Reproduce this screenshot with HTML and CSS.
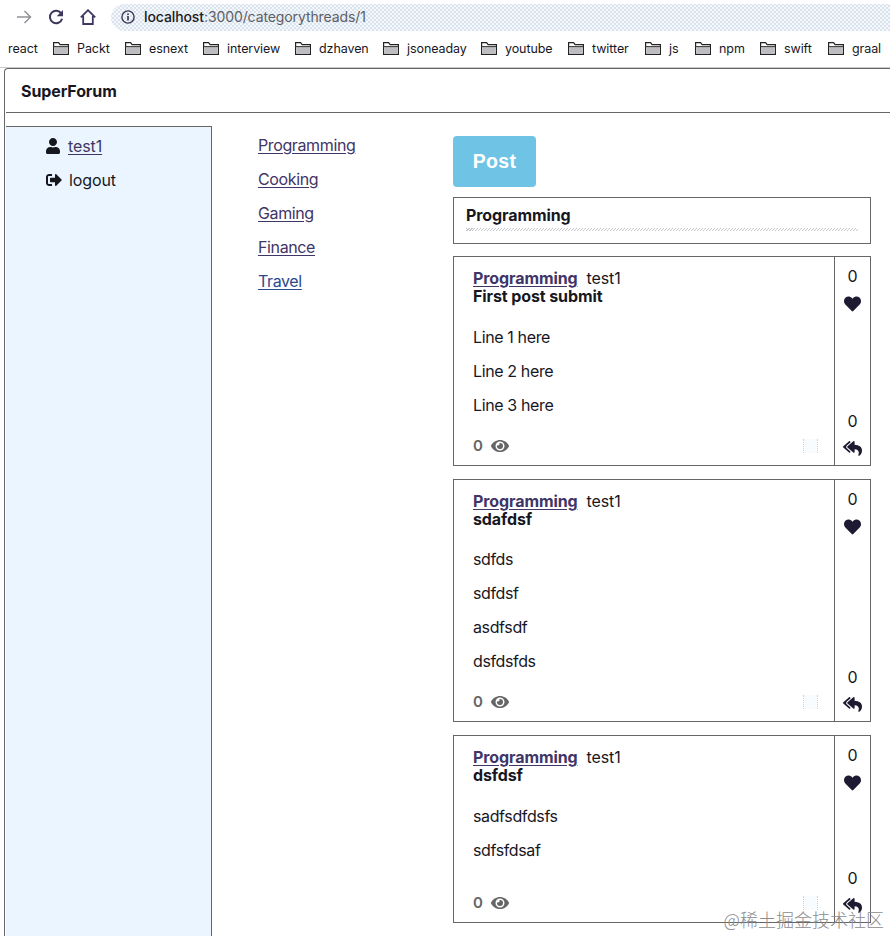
FILE: index.html
```
<!DOCTYPE html>
<html lang="en">
<head>
    <meta charset="UTF-8">
    <meta name="viewport" content="width=device-width, initial-scale=1.0">
    <title>SuperForum</title>
    <link rel="stylesheet" href="styles.css">
</head>
<body>
    <!-- shared icons -->
    <svg class="sprite">
        <symbol id="folder" viewBox="0 0 16 13">
            <path d="M.6 12.4V.7h5l1.5 2h8.3v9.7z" fill="#fff" stroke="#222" stroke-width="1.2"/>
            <path d="M1.5 5h13v6.7h-13z" fill="#bdbdc1"/>
            <path d="M.6 4.6h14.8" stroke="#333" stroke-width="1"/>
        </symbol>
        <symbol id="heart" viewBox="0 0 512 512">
            <path d="M462.3 62.6C407.5 15.9 326 24.3 275.7 76.2L256 96.5l-19.7-20.3C186.1 24.3 104.5 15.9 49.7 62.6c-62.8 53.6-66.1 149.8-9.9 207.9l193.5 199.8c12.5 12.9 32.8 12.9 45.3 0l193.5-199.8c56.3-58.1 53-154.3-9.8-207.9z"/>
        </symbol>
        <symbol id="reply" viewBox="0 0 576 512">
            <path d="M136.309 189.836L312.313 37.851C327.72 24.546 352 35.348 352 56.015v82.763c129.182 10.231 224 52.212 224 183.548 0 61.441-39.582 122.309-83.333 154.132-13.653 9.931-33.111-2.533-28.077-18.631 38.512-123.162-3.922-169.482-112.59-182.015v84.175c0 20.701-24.3 31.453-39.687 18.164L136.309 226.164c-11.071-9.561-11.086-26.753 0-36.328zm-128 36.328L184.313 378.15C199.7 391.439 224 380.687 224 359.986v-15.818l-108.606-93.785A55.96 55.96 0 0 1 96 207.998a55.953 55.953 0 0 1 19.393-42.38L224 71.832V56.015c0-20.667-24.28-31.469-39.687-18.164L8.309 189.836c-11.086 9.575-11.071 26.767 0 36.328z"/>
        </symbol>
        <symbol id="eye" viewBox="0 0 576 512">
            <path d="M572.52 241.4C518.29 135.59 410.93 64 288 64S57.68 135.64 3.48 241.41a32.35 32.35 0 0 0 0 29.19C57.71 376.41 165.07 448 288 448s230.32-71.64 284.52-177.41a32.35 32.35 0 0 0 0-29.19zM288 400a144 144 0 1 1 144-144 143.93 143.93 0 0 1-144 144zm0-240a95.31 95.31 0 0 0-25.31 3.79 47.85 47.85 0 0 1-66.9 66.9A95.78 95.78 0 1 0 288 160z"/>
        </symbol>
    </svg>

    <div class="toolbar">
        <svg class="nav-icon" viewBox="0 0 16 16"><path d="M1 8h13M8.5 2l6 6-6 6" fill="none" stroke="#929297" stroke-width="1.5"/></svg>
        <svg class="nav-icon" viewBox="0 0 16 16"><path d="M13.4 4.7A6.2 6.2 0 1 0 14.1 9.7" fill="none" stroke="#3c375c" stroke-width="2"/><path d="M15 1v6.3H8.7z" fill="#3c375c"/></svg>
        <svg class="nav-icon" viewBox="0 0 16 16"><path d="M.8 8.4L8 1.2l7.2 7.2M3.2 7v8h9.6V7" fill="none" stroke="#3c375c" stroke-width="1.8"/></svg>
        <div class="address">
            <svg class="info" viewBox="0 0 14 14"><circle cx="7" cy="7" r="6.1" fill="none" stroke="#3c3a5a" stroke-width="1.4"/><path d="M7 6v4.5M7 3.4v1.7" stroke="#3c3a5a" stroke-width="1.7"/></svg>
            <span class="url"><b>localhost</b>:3000/categorythreads/1</span>
        </div>
    </div>
    <div class="bookmarks">
        <span class="bm first">react</span>
        <span class="bm packt"><svg><use href="#folder"/></svg>Packt</span>
        <span class="bm esnext"><svg><use href="#folder"/></svg>esnext</span>
        <span class="bm interview"><svg><use href="#folder"/></svg>interview</span>
        <span class="bm dzhaven"><svg><use href="#folder"/></svg>dzhaven</span>
        <span class="bm jsoneaday"><svg><use href="#folder"/></svg>jsoneaday</span>
        <span class="bm youtube"><svg><use href="#folder"/></svg>youtube</span>
        <span class="bm twitter"><svg><use href="#folder"/></svg>twitter</span>
        <span class="bm js"><svg><use href="#folder"/></svg>js</span>
        <span class="bm npm"><svg><use href="#folder"/></svg>npm</span>
        <span class="bm swift"><svg><use href="#folder"/></svg>swift</span>
        <span class="bm graal"><svg><use href="#folder"/></svg>graal</span>
    </div>

    <div class="app">
        <header class="app-header">SuperForum</header>
        <div class="columns">
            <nav class="sidebar">
                <div class="side-item">
                    <svg class="user-icon" viewBox="0 0 448 512"><path d="M224 256c70.7 0 128-57.3 128-128S294.7 0 224 0 96 57.3 96 128s57.3 128 128 128zm89.6 32h-16.7c-22.2 10.2-46.9 16-72.9 16s-50.6-5.8-72.9-16h-16.7C60.2 288 0 348.2 0 422.4V464c0 26.5 21.5 48 48 48h352c26.5 0 48-21.5 48-48v-41.6c0-74.2-60.2-134.4-134.4-134.4z"/></svg>
                    <a href="#">test1</a>
                </div>
                <div class="side-item">
                    <svg class="logout-icon" viewBox="0 0 512 512"><path d="M497 273L329 441c-15 15-41 4.5-41-17v-96H152c-13.3 0-24-10.7-24-24v-96c0-13.3 10.7-24 24-24h136V88c0-21.4 25.9-32 41-17l168 168c9.3 9.4 9.3 24.6 0 34zM192 436v-40c0-6.6-5.4-12-12-12H96c-17.7 0-32-14.3-32-32V160c0-17.7 14.3-32 32-32h84c6.6 0 12-5.4 12-12V76c0-6.6-5.4-12-12-12H96c-53 0-96 43-96 96v192c0 53 43 96 96 96h84c6.6 0 12-5.4 12-12z"/></svg>
                    <span>logout</span>
                </div>
            </nav>
            <div class="categories">
                <a href="#">Programming</a>
                <a href="#">Cooking</a>
                <a href="#">Gaming</a>
                <a href="#">Finance</a>
                <a href="#" class="travel">Travel</a>
            </div>
            <main class="main">
                <button class="post-btn">Post</button>
                <div class="title-box">
                    <strong>Programming</strong>
                    <div class="hatch"></div>
                </div>
                <div class="card card-1">
                    <div class="card-body">
                        <div class="card-top"><a href="#">Programming</a><span>test1</span></div>
                        <div class="card-title">First post submit</div>
                        <div class="card-text">
                            <p>Line 1 here</p>
                            <p>Line 2 here</p>
                            <p>Line 3 here</p>
                        </div>
                        <div class="card-foot"><b>0</b><svg><use href="#eye"/></svg><i class="edit"></i></div>
                    </div>
                    <div class="points">
                        <span>0</span><svg class="heart"><use href="#heart"/></svg>
                        <span class="replies">0</span><svg class="reply"><use href="#reply"/></svg>
                    </div>
                </div>
                <div class="card card-2">
                    <div class="card-body">
                        <div class="card-top"><a href="#">Programming</a><span>test1</span></div>
                        <div class="card-title">sdafdsf</div>
                        <div class="card-text">
                            <p>sdfds</p>
                            <p>sdfdsf</p>
                            <p>asdfsdf</p>
                            <p>dsfdsfds</p>
                        </div>
                        <div class="card-foot"><b>0</b><svg><use href="#eye"/></svg><i class="edit"></i></div>
                    </div>
                    <div class="points">
                        <span>0</span><svg class="heart"><use href="#heart"/></svg>
                        <span class="replies">0</span><svg class="reply"><use href="#reply"/></svg>
                    </div>
                </div>
                <div class="card card-3">
                    <div class="card-body">
                        <div class="card-top"><a href="#">Programming</a><span>test1</span></div>
                        <div class="card-title">dsfdsf</div>
                        <div class="card-text">
                            <p>sadfsdfdsfs</p>
                            <p>sdfsfdsaf</p>
                        </div>
                        <div class="card-foot"><b>0</b><svg><use href="#eye"/></svg><i class="edit"></i></div>
                    </div>
                    <div class="points">
                        <span>0</span><svg class="heart"><use href="#heart"/></svg>
                        <span class="replies">0</span><svg class="reply"><use href="#reply"/></svg>
                    </div>
                </div>
            </main>
        </div>
    </div>
    <div class="watermark">@稀土掘金技术社区</div>
</body>
</html>
```
FILE: styles.css
```
* {
    box-sizing: border-box;
}
body {
    margin: 0;
    width: 890px;
    height: 936px;
    overflow: hidden;
    position: relative;
    background: #fff;
    color: #17171f;
    font-family: Inter, "Liberation Sans", sans-serif;
    font-size: 16px;
    line-height: 18px;
    letter-spacing: -0.1px;
}
.sprite {
    display: none;
}
svg {
    flex: none;
}

/* browser bar */
.toolbar {
    display: flex;
    align-items: center;
    height: 34px;
    padding-left: 16px;
}
.nav-icon {
    width: 16px;
    height: 16px;
    margin-right: 16px;
}
.address {
    display: flex;
    align-items: center;
    flex: 1;
    height: 27px;
    margin-top: 1px;
    margin-left: -1px;
    padding: 0 0 1px 10px;
    border-radius: 14px 0 0 14px;
    background-color: #f3f8fc;
    background-image: radial-gradient(circle, #c9d3e0 0.5px, transparent 1px), radial-gradient(circle, #c9d3e0 0.5px, transparent 1px);
    background-size: 4px 4px;
    background-position: 0 0, 2px 2px;
}
.info {
    width: 14px;
    height: 14px;
    margin-right: 9px;
}
.url {
    font-size: 14px;
    letter-spacing: -0.1px;
    color: #5b6066;
}
.url b {
    font-weight: 500;
    color: #1b1b22;
}
.bookmarks {
    display: flex;
    align-items: center;
    height: 34px;
    padding: 0 0 4px 8px;
    border-bottom: 1px solid #c9c9cb;
    font-size: 12.5px;
    letter-spacing: -0.08px;
}
.bm {
    display: flex;
    align-items: center;
    flex: none;
    white-space: nowrap;
}
.bm svg {
    width: 16px;
    height: 13px;
    margin-right: 8px;
}
.first { width: 45px; }
.packt { width: 72px; }
.esnext { width: 78px; }
.interview { width: 92px; }
.dzhaven { width: 88px; }
.jsoneaday { width: 98px; }
.youtube { width: 87px; }
.twitter { width: 77px; }
.js { width: 50px; }
.npm { width: 65px; }
.swift { width: 68px; }

/* page */
.app {
    margin-left: 4px;
    height: 868px;
    padding-left: 1px;
    border-left: 1px solid #666;
    border-top: 1px solid #666;
    border-radius: 4px 0 0 0;
}
.app-header {
    height: 44px;
    padding: 13px 0 0 15px;
    border-bottom: 1px solid #666;
    font-weight: 700;
}
.columns {
    display: flex;
    height: 823px;
}
.sidebar {
    width: 206px;
    margin-top: 13px;
    padding: 10px 0 0 40px;
    background: #eaf5ff;
    border-top: 1px solid #666;
    border-right: 1px solid #666;
    fill: #17171f;
}
.side-item {
    display: flex;
    align-items: center;
    height: 18px;
    margin-bottom: 16px;
}
.user-icon {
    width: 14px;
    height: 16px;
    margin-right: 8px;
}
.logout-icon {
    width: 16px;
    height: 16px;
    margin-right: 7px;
}
a {
    color: #3f3566;
    text-underline-offset: 2px;
}
.categories {
    display: flex;
    flex-direction: column;
    align-items: flex-start;
    gap: 16px;
    width: 241px;
    padding: 23px 0 0 46px;
    letter-spacing: -0.38px;
}
.travel {
    color: #2b4a8c;
}
.main {
    width: 418px;
    padding-top: 23px;
}
.post-btn {
    display: block;
    width: 83px;
    height: 51px;
    padding: 0;
    border: 0;
    border-radius: 4px;
    background: #6fc4e6;
    color: #fff;
    font: bold 19.5px "Liberation Sans", Arial, sans-serif;
    letter-spacing: 0.3px;
}
.title-box {
    height: 47px;
    margin: 10px 0 12px;
    padding: 8px 12px 0;
    border: 1px solid #666;
}
.title-box strong {
    display: block;
}
.hatch {
    height: 3px;
    margin-top: 4px;
    background: repeating-linear-gradient(135deg, #c4c8cc 0 0.71px, #fff 0.71px 2.12px);
}
.card {
    display: flex;
    margin-bottom: 13px;
    border: 1px solid #666;
}
.card-1 { height: 210px; }
.card-2 { height: 243px; }
.card-3 { height: 188px; }
.card-body {
    display: flex;
    flex-direction: column;
    flex: 1;
    padding: 12px 16px 10px 19px;
}
.card-top {
    display: flex;
    gap: 9px;
}
.card-top a,
.card-title {
    font-weight: 700;
}
.card-text {
    flex: 1;
    padding-top: 23px;
    letter-spacing: -0.37px;
}
.card-2 .card-text {
    padding-top: 22px;
}
.card-text p {
    margin: 0 0 16px;
}
.card-foot {
    display: flex;
    align-items: center;
    height: 18px;
    color: #666;
    font-size: 15px;
}
.card-foot b {
    font-weight: 600;
}
.card-foot svg {
    width: 18px;
    height: 16px;
    margin-left: 8px;
    fill: #666;
}
.edit {
    width: 15px;
    height: 14px;
    margin-left: auto;
    border-left: 1px dotted #ccd4d8;
    border-right: 1px dotted #ccd4d8;
    background: #f8fcfe;
}
.points {
    display: flex;
    flex-direction: column;
    align-items: center;
    width: 36px;
    padding: 10px 0 8px;
    border-left: 1px solid #666;
    fill: #1d1a31;
}
.heart {
    width: 17px;
    height: 18px;
    margin-top: 10px;
}
.replies {
    margin-top: auto;
}
.reply {
    width: 19px;
    height: 17px;
    margin-top: 10px;
}

.watermark {
    position: absolute;
    right: 6px;
    bottom: 4px;
    color: #8c8c8c;
    font: 300 18px/26px "Noto Sans CJK SC", sans-serif;
    letter-spacing: 0;
}
```
